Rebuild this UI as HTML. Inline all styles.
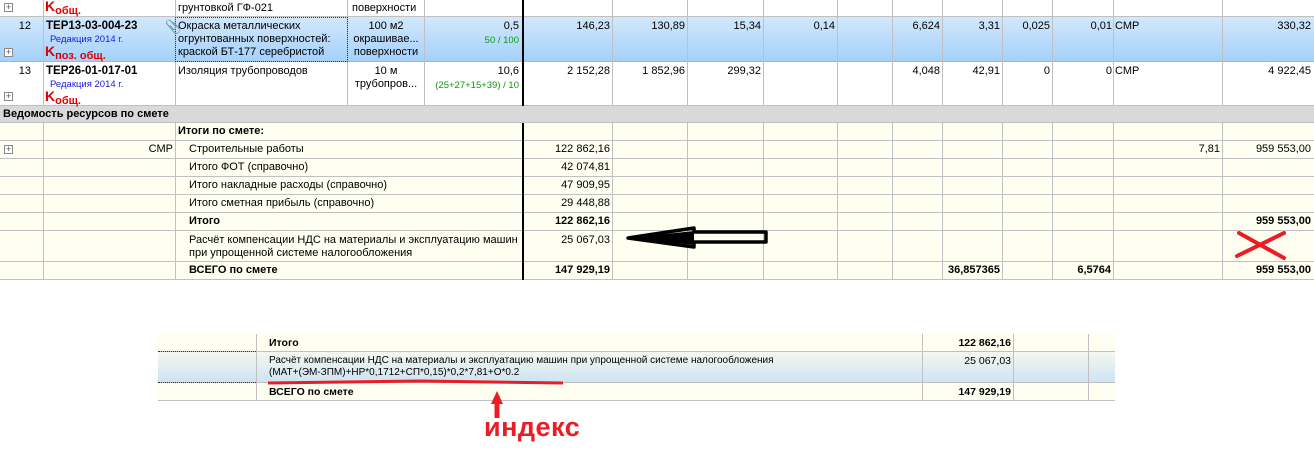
<!DOCTYPE html>
<html><head><meta charset="utf-8">
<style>
*{margin:0;padding:0;box-sizing:border-box}
body{width:1314px;height:464px;background:#fff;position:relative;overflow:hidden;font-family:"Liberation Sans","DejaVu Sans",sans-serif;font-size:11px;color:#000}
.a{position:absolute;white-space:nowrap}
.v{position:absolute;width:1px;background:#c0c0c0}
.h{position:absolute;height:1px;background:#c0c0c0}
.r{text-align:right}
.b{font-weight:bold}
.pl{position:absolute;width:9px;height:9px;border:1px solid #8a8a8a;background:#fff;font-size:9px;line-height:7px;text-align:center;color:#555}
.red{color:#e00000;font-weight:bold;font-size:14px}
.red sub{font-size:11px;vertical-align:-3px}
.blue{color:#1a1ae0;font-size:9.5px}
.grn{color:#0a9a0a;font-size:9.5px}
</style></head><body>
<div class="a" style="left:0;top:17px;width:1314px;height:45px;background:linear-gradient(#d2e8fc,#a3d0fb)"></div>
<div class="a" style="left:0;top:106px;width:1314px;height:17px;background:#d9d9d9"></div>
<div class="a" style="left:0;top:123px;width:1314px;height:156px;background:#fefff0"></div>

<div class="h" style="left:0;top:16px;width:1314px"></div>
<div class="h" style="left:0;top:61px;width:1314px;background:#9cb8d4"></div>
<div class="h" style="left:0;top:105px;width:1314px"></div>
<div class="h" style="left:0;top:122px;width:1314px"></div>
<div class="h" style="left:0;top:140px;width:1314px"></div>
<div class="h" style="left:0;top:158px;width:1314px"></div>
<div class="h" style="left:0;top:176px;width:1314px"></div>
<div class="h" style="left:0;top:194px;width:1314px"></div>
<div class="h" style="left:0;top:212px;width:1314px"></div>
<div class="h" style="left:0;top:230px;width:1314px"></div>
<div class="h" style="left:0;top:261px;width:1314px"></div>
<div class="h" style="left:0;top:279px;width:1314px"></div>

<div class="v" style="left:43px;top:0;height:106px"></div>
<div class="v" style="left:175px;top:0;height:106px"></div>
<div class="v" style="left:347px;top:0;height:106px"></div>
<div class="v" style="left:424px;top:0;height:106px"></div>
<div class="v" style="left:612px;top:0;height:106px"></div>
<div class="v" style="left:687px;top:0;height:106px"></div>
<div class="v" style="left:763px;top:0;height:106px"></div>
<div class="v" style="left:837px;top:0;height:106px"></div>
<div class="v" style="left:892px;top:0;height:106px"></div>
<div class="v" style="left:942px;top:0;height:106px"></div>
<div class="v" style="left:1002px;top:0;height:106px"></div>
<div class="v" style="left:1052px;top:0;height:106px"></div>
<div class="v" style="left:1113px;top:0;height:106px"></div>
<div class="v" style="left:1222px;top:0;height:106px"></div>
<div class="v" style="left:43px;top:123px;height:157px"></div>
<div class="v" style="left:175px;top:123px;height:157px"></div>
<div class="v" style="left:612px;top:123px;height:157px"></div>
<div class="v" style="left:687px;top:123px;height:157px"></div>
<div class="v" style="left:763px;top:123px;height:157px"></div>
<div class="v" style="left:837px;top:123px;height:157px"></div>
<div class="v" style="left:892px;top:123px;height:157px"></div>
<div class="v" style="left:942px;top:123px;height:157px"></div>
<div class="v" style="left:1002px;top:123px;height:157px"></div>
<div class="v" style="left:1052px;top:123px;height:157px"></div>
<div class="v" style="left:1113px;top:123px;height:157px"></div>
<div class="v" style="left:1222px;top:123px;height:157px"></div>
<div class="a" style="left:522px;top:0;width:2px;height:106px;background:#000"></div>
<div class="a" style="left:522px;top:123px;width:2px;height:157px;background:#000"></div>
<div class="a" style="left:175px;top:17px;width:173px;height:45px;border:1px dotted #333"></div>

<div class="pl" style="left:4px;top:3px">+</div>
<div class="a red" style="left:45px;top:-2px">K<sub>общ.</sub></div>
<div class="a" style="left:178px;top:2px">грунтовкой ГФ-021</div>
<div class="a" style="left:352px;top:2px">поверхности</div>

<div class="a r" style="left:0;width:31px;top:20px">12</div>
<div class="a b" style="left:46px;top:20px;font-size:11.5px">ТЕР13-03-004-23</div>
<div class="a" style="left:165px;top:19px;color:#777;font-size:13px">&#128206;</div>
<div class="a blue" style="left:50px;top:34px">Редакция 2014 г.</div>
<div class="a red" style="left:45px;top:43px">K<sub>поз. общ.</sub></div>
<div class="pl" style="left:4px;top:48px">+</div>
<div class="a" style="left:178px;top:20px;line-height:13px">Окраска металлических<br>огрунтованных поверхностей:<br>краской БТ-177 серебристой</div>
<div class="a" style="left:348px;width:76px;top:20px;line-height:13px;text-align:center">100 м2<br>окрашивае...<br>поверхности</div>
<div class="a r" style="left:424px;width:95px;top:20px">0,5</div>
<div class="a r grn" style="left:424px;width:95px;top:35px">50 / 100</div>
<div class="a r" style="left:523px;width:87px;top:20px">146,23</div>
<div class="a r" style="left:612px;width:73px;top:20px">130,89</div>
<div class="a r" style="left:687px;width:74px;top:20px">15,34</div>
<div class="a r" style="left:763px;width:72px;top:20px">0,14</div>
<div class="a r" style="left:892px;width:48px;top:20px">6,624</div>
<div class="a r" style="left:942px;width:58px;top:20px">3,31</div>
<div class="a r" style="left:1002px;width:48px;top:20px">0,025</div>
<div class="a r" style="left:1052px;width:60px;top:20px">0,01</div>
<div class="a" style="left:1115px;top:20px">СМР</div>
<div class="a r" style="left:1222px;width:89px;top:20px">330,32</div>

<div class="a r" style="left:0;width:31px;top:65px">13</div>
<div class="a b" style="left:46px;top:65px;font-size:11.5px">ТЕР26-01-017-01</div>
<div class="a blue" style="left:50px;top:79px">Редакция 2014 г.</div>
<div class="a red" style="left:45px;top:88px">K<sub>общ.</sub></div>
<div class="pl" style="left:4px;top:92px">+</div>
<div class="a" style="left:178px;top:65px">Изоляция трубопроводов</div>
<div class="a" style="left:348px;width:76px;top:65px;line-height:13px;text-align:center">10 м<br>трубопров...</div>
<div class="a r" style="left:424px;width:95px;top:65px">10,6</div>
<div class="a r grn" style="left:424px;width:95px;top:80px">(25+27+15+39) / 10</div>
<div class="a r" style="left:523px;width:87px;top:65px">2 152,28</div>
<div class="a r" style="left:612px;width:73px;top:65px">1 852,96</div>
<div class="a r" style="left:687px;width:74px;top:65px">299,32</div>
<div class="a r" style="left:892px;width:48px;top:65px">4,048</div>
<div class="a r" style="left:942px;width:58px;top:65px">42,91</div>
<div class="a r" style="left:1002px;width:48px;top:65px">0</div>
<div class="a r" style="left:1052px;width:60px;top:65px">0</div>
<div class="a" style="left:1115px;top:65px">СМР</div>
<div class="a r" style="left:1222px;width:89px;top:65px">4 922,45</div>

<div class="a b" style="left:3px;top:108px">Ведомость ресурсов по смете</div>

<div class="a b" style="left:178px;top:125px">Итоги по смете:</div>
<div class="pl" style="left:4px;top:145px">+</div>
<div class="a r" style="left:43px;width:130px;top:143px">СМР</div>
<div class="a" style="left:189px;top:143px">Строительные работы</div>
<div class="a r" style="left:523px;width:87px;top:143px">122 862,16</div>
<div class="a r" style="left:1113px;width:107px;top:143px">7,81</div>
<div class="a r" style="left:1222px;width:89px;top:143px">959 553,00</div>
<div class="a" style="left:189px;top:161px">Итого ФОТ (справочно)</div>
<div class="a r" style="left:523px;width:87px;top:161px">42 074,81</div>
<div class="a" style="left:189px;top:179px">Итого накладные расходы (справочно)</div>
<div class="a r" style="left:523px;width:87px;top:179px">47 909,95</div>
<div class="a" style="left:189px;top:197px">Итого сметная прибыль (справочно)</div>
<div class="a r" style="left:523px;width:87px;top:197px">29 448,88</div>
<div class="a b" style="left:189px;top:215px">Итого</div>
<div class="a r b" style="left:523px;width:87px;top:215px">122 862,16</div>
<div class="a r b" style="left:1222px;width:89px;top:215px">959 553,00</div>
<div class="a" style="left:189px;top:234px;line-height:13px">Расчёт компенсации НДС на материалы и эксплуатацию машин<br>при упрощенной системе налогообложения</div>
<div class="a r" style="left:523px;width:87px;top:234px">25 067,03</div>
<div class="a b" style="left:189px;top:264px">ВСЕГО по смете</div>
<div class="a r b" style="left:523px;width:87px;top:264px">147 929,19</div>
<div class="a b" style="left:942px;top:264px;width:58px;overflow:hidden;direction:rtl;text-align:right">36,857365</div>
<div class="a r b" style="left:1002px;width:109px;top:264px">6,5764</div>
<div class="a r b" style="left:1222px;width:89px;top:264px">959 553,00</div>

<!-- bottom table -->
<div class="a" style="left:158px;top:334px;width:957px;height:17px;background:#fefff0"></div>
<div class="a" style="left:158px;top:352px;width:957px;height:30px;background:linear-gradient(#f4f8f0,#cfe3f2)"></div>
<div class="a" style="left:158px;top:383px;width:957px;height:17px;background:#fefff0"></div>
<div class="h" style="left:158px;top:351px;width:957px"></div>
<div class="h" style="left:158px;top:382px;width:957px"></div>
<div class="h" style="left:158px;top:400px;width:957px"></div>
<div class="a" style="left:158px;top:351px;width:98px;border-top:1px dotted #333"></div>
<div class="a" style="left:158px;top:382px;width:98px;border-top:1px dotted #333"></div>
<div class="v" style="left:256px;top:334px;height:67px"></div>
<div class="v" style="left:922px;top:334px;height:67px"></div>
<div class="v" style="left:1013px;top:334px;height:67px"></div>
<div class="v" style="left:1088px;top:334px;height:67px"></div>
<div class="a b" style="left:269px;top:337px;font-size:10.5px">Итого</div>
<div class="a r b" style="left:922px;width:89px;top:337px;font-size:10.5px">122 862,16</div>
<div class="a" style="left:269px;top:355px;line-height:12px;font-size:10px">Расчёт компенсации НДС на материалы и эксплуатацию машин при упрощенной системе налогообложения<br>(МАТ+(ЭМ-ЗПМ)+НР*0,1712+СП*0,15)*0,2*7,81+О*0.2</div>
<div class="a r" style="left:922px;width:89px;top:355px;font-size:10.5px">25 067,03</div>
<div class="a b" style="left:269px;top:386px;font-size:10.5px">ВСЕГО по смете</div>
<div class="a r b" style="left:922px;width:89px;top:386px;font-size:10.5px">147 929,19</div>

<div class="a b" style="left:484px;top:412px;font-size:27px;color:#ec1c24;letter-spacing:0.5px">индекс</div>

<svg class="a" style="left:0;top:0" width="1314" height="464">
<path d="M628 238 L694 228 L694 232 L766 232 L766 242 L694 242 L694 247 Z" fill="none" stroke="#000" stroke-width="3.5" stroke-linejoin="round"/>
<path d="M628 238 L694 231 L694 245 Z" fill="#000"/>
<path d="M1239 233 L1284 258 M1284 233 L1237 256" stroke="#ec1c24" stroke-width="4" stroke-linecap="round"/>
<path d="M268 383 L420 381 L563 383" stroke="#ec1c24" stroke-width="3" fill="none"/>
<path d="M497 418 L497 398" stroke="#ec1c24" stroke-width="5" fill="none"/>
<path d="M491 404 L497 391 L503 404 Z" fill="#ec1c24"/>
</svg>
</body></html>
